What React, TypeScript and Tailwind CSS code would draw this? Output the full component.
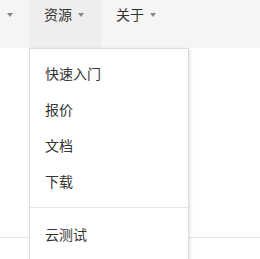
const caret = "block w-0 h-0 border-l-[3.5px] border-r-[3.5px] border-t-[4px] border-l-transparent border-r-transparent border-t-[#888]";

const items = ["快速入门", "报价", "文档", "下载"];

export default function App() {
  return (
    <div
      className="relative w-[260px] h-[259px] overflow-hidden bg-white text-[14px] text-[#333]"
      style={{ fontFamily: '"Noto Sans CJK SC", "Noto Sans", sans-serif' }}
    >
      <nav className="flex h-12 bg-[#f5f5f5]">
        <div className="flex w-[29px] items-start pl-[7px] pt-[13px]">
          <span className={caret} />
        </div>
        <div className="flex w-[72px] items-start gap-[6px] bg-[#eeeeee] pl-[15px] pt-[4px] leading-5">
          <span>资源</span>
          <span className={caret + " mt-[9px]"} />
        </div>
        <div className="flex items-start gap-[6px] pl-[15px] pt-[4px] leading-5">
          <span>关于</span>
          <span className={caret + " mt-[9px]"} />
        </div>
      </nav>

      <div className="mt-[189px] border-t border-[#e5e5e5]" />

      <div className="absolute left-[29px] top-12 w-[160px] h-[230px] border border-[#dddddd] bg-white pt-[6px] shadow-[1px_1px_3px_rgba(0,0,0,0.12)]">
        {items.map((t) => (
          <div key={t} className="flex h-9 items-center px-[15px]">
            {t}
          </div>
        ))}
        <div className="my-2 border-t border-[#e5e5e5]" />
        <div className="flex h-9 items-center px-[15px]">云测试</div>
      </div>
    </div>
  );
}
